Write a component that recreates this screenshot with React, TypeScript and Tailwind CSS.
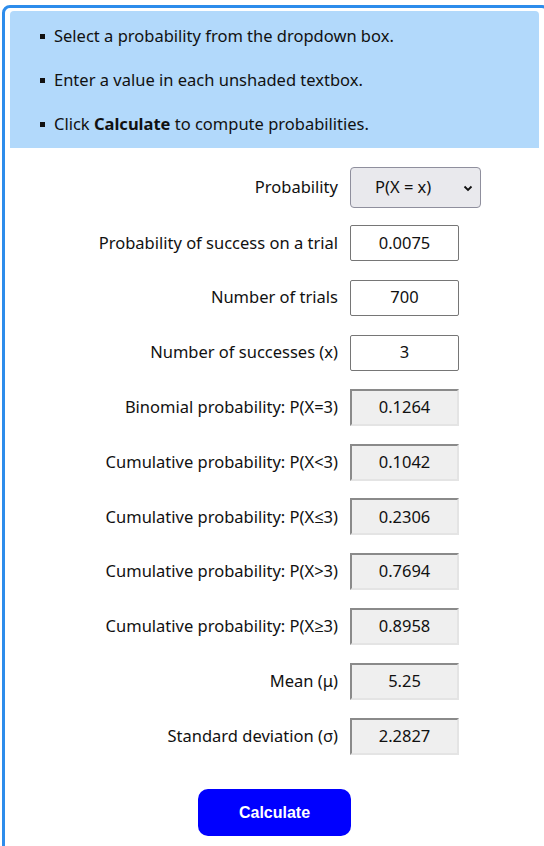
import React from "react";

const rows: { label: string; value: string; kind: "input" | "output" }[] = [
  { label: "Probability of success on a trial", value: "0.0075", kind: "input" },
  { label: "Number of trials", value: "700", kind: "input" },
  { label: "Number of successes (x)", value: "3", kind: "input" },
  { label: "Binomial probability: P(X=3)", value: "0.1264", kind: "output" },
  { label: "Cumulative probability: P(X<3)", value: "0.1042", kind: "output" },
  { label: "Cumulative probability: P(X\u22643)", value: "0.2306", kind: "output" },
  { label: "Cumulative probability: P(X>3)", value: "0.7694", kind: "output" },
  { label: "Cumulative probability: P(X\u22653)", value: "0.8958", kind: "output" },
  { label: "Mean (\u03bc)", value: "5.25", kind: "output" },
  { label: "Standard deviation (\u03c3)", value: "2.2827", kind: "output" },
];

export default function App() {
  return (
    <div
      className="w-[544px] h-[846px] overflow-hidden bg-white text-[#111]"
      style={{ fontFamily: "'Noto Sans', 'Open Sans', sans-serif" }}
    >
      <div className="ml-[2px] mt-[5px] w-[548px] h-[900px] border-[3px] border-[#2d8ceb] rounded-[8px] pl-[5px] pt-[3px]">
        <div className="w-[529px] h-[137px] bg-[#b2d9fb] rounded-t-[4px] pl-[30px] pt-[14px]">
          <ul className="flex flex-col gap-[23px] text-[16.5px] leading-[21px]">
            {[
              <>Select a probability from the dropdown box.</>,
              <>Enter a value in each unshaded textbox.</>,
              <>
                Click <b className="font-bold">Calculate</b> to compute probabilities.
              </>,
            ].map((c, i) => (
              <li key={i} className="flex items-center">
                <span className="w-[5px] h-[5px] bg-[#111] mr-[9px] mt-[1px]" />
                <span>{c}</span>
              </li>
            ))}
          </ul>
        </div>
        <div className="flex flex-col pt-[19px] w-[529px]">
          <div className="flex items-center h-[41px]">
            <div className="w-[330px] text-right text-[16.5px] pr-[2px]">Probability</div>
            <div className="ml-[10px] w-[131px] h-[41px] bg-[#e9e9ed] border border-[#8f8f9d] rounded-[4px] flex items-center pl-[24px] pr-[7px] text-[16.5px]">
              <span className="flex-1">P(X = x)</span>
              <svg width="10" height="7" viewBox="0 0 10 7" className="mt-[1px]">
                <path d="M1.5 1.5 L5 5 L8.5 1.5" stroke="#111" strokeWidth="1.8" fill="none" />
              </svg>
            </div>
          </div>
          <div className="flex flex-col gap-[18.8px] mt-[17px]">
            {rows.map((r) => (
              <div key={r.label} className="flex items-center h-[36px]">
                <div className="w-[330px] text-right text-[16.5px] pr-[2px] whitespace-nowrap">{r.label}</div>
                {r.kind === "input" ? (
                  <div className="ml-[10px] w-[109px] h-[36px] bg-white border border-[#767676] rounded-[2px] flex items-center justify-center text-[16.5px]">
                    {r.value}
                  </div>
                ) : (
                  <div className="ml-[10px] w-[109px] h-[37px] bg-[#efefef] border-2 border-t-[#8a8a8a] border-l-[#8a8a8a] border-r-[#e4e4e4] border-b-[#e4e4e4] flex items-center justify-center text-[16.5px]">
                    {r.value}
                  </div>
                )}
              </div>
            ))}
          </div>
          <div className="flex justify-center pt-[35px]">
            <button
              className="w-[153px] h-[47px] bg-[#0000ff] text-white rounded-[10px] text-[16px] font-bold"
              style={{ fontFamily: "'Liberation Sans', Arial, sans-serif" }}
            >
              Calculate
            </button>
          </div>
        </div>
      </div>
    </div>
  );
}
